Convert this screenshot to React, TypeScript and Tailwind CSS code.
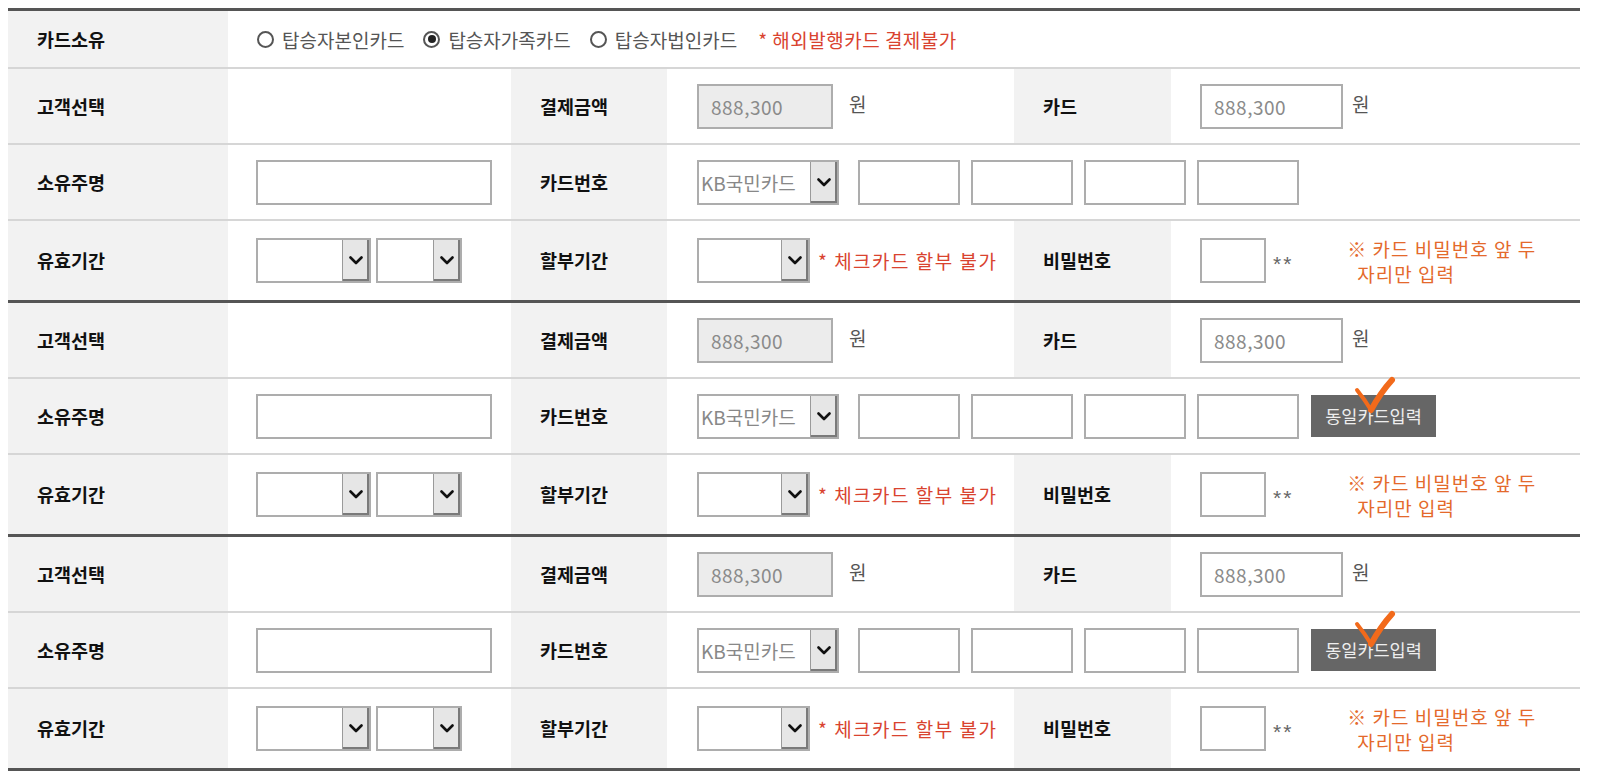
import React from "react";

const FONT = "font-['Noto_Sans_CJK_KR','Noto_Sans',sans-serif]";

function Chevron() {
  return (
    <svg width="14" height="9" viewBox="0 0 14 9">
      <polyline points="1.5,1.5 7,7 12.5,1.5" fill="none" stroke="#111" strokeWidth="2.6" strokeLinecap="round" strokeLinejoin="round" />
    </svg>
  );
}

function Select({ w, text }: { w: string; text?: string }) {
  return (
    <div className={`flex h-[45px] border-2 border-[#adadad] bg-white ${w}`}>
      <div className="flex-1 flex items-center pl-[2px] text-[19px] text-[#888] leading-none whitespace-nowrap overflow-hidden">{text}</div>
      <div className="w-[27px] bg-[#e6e6e6] border-l border-[#9a9a9a] shadow-[inset_-2px_-2px_0_#7a7a7a] flex items-center justify-center">
        <Chevron />
      </div>
    </div>
  );
}

function Box({ w, gray, text }: { w: string; gray?: boolean; text?: string }) {
  return (
    <div
      className={`h-[45px] border-2 border-[#adadad] flex items-center pl-[12px] text-[19px] tracking-[0.5px] text-[#8a8a8a] leading-none ${w} ${gray ? "bg-[#ececec]" : "bg-white"}`}
    >
      {text}
    </div>
  );
}

function Label({ children }: { children: React.ReactNode }) {
  return (
    <div className="bg-[#f2f2f2] flex items-center pl-[29px] text-[18.5px] font-bold text-[#111] leading-none">
      {children}
    </div>
  );
}

function Radio({ checked, label }: { checked?: boolean; label: string }) {
  return (
    <div className="flex items-center">
      <div className="w-[17px] h-[17px] rounded-full border-2 border-[#555] flex items-center justify-center">
        {checked && <div className="w-[8px] h-[8px] rounded-full bg-[#222]" />}
      </div>
      <span className="ml-[8px] text-[19px] text-[#555] leading-none">{label}</span>
    </div>
  );
}

function Check() {
  return (
    <svg className="absolute left-[40px] top-[-21px]" width="50" height="42" viewBox="0 0 50 42">
      <path d="M6 16 Q14 26 20 36" fill="none" stroke="#f26a1b" strokeWidth="4" strokeLinecap="round" />
      <path d="M20 36 Q30 18 41 6" fill="none" stroke="#f26a1b" strokeWidth="6" strokeLinecap="round" />
    </svg>
  );
}

function Thin() {
  return <div className="h-[2px] bg-[#d6d6d6]" />;
}
function Thick() {
  return <div className="h-[3px] bg-[#555]" />;
}

function Group({ button }: { button?: boolean }) {
  return (
    <>
      <div className="grid grid-cols-[220px_283px_156px_347px_157px_1fr] h-[74px]">
        <Label>고객선택</Label>
        <div />
        <Label>결제금액</Label>
        <div className="flex items-center pl-[30px]">
          <Box w="w-[136px]" gray text="888,300" />
          <span className="ml-[16px] -mt-[6px] text-[19px] text-[#555] leading-none">원</span>
        </div>
        <Label>카드</Label>
        <div className="flex items-center pl-[29px]">
          <Box w="w-[143px]" text="888,300" />
          <span className="ml-[9px] -mt-[6px] text-[19px] text-[#555] leading-none">원</span>
        </div>
      </div>
      <Thin />
      <div className="grid grid-cols-[220px_283px_156px_1fr] h-[74px]">
        <Label>소유주명</Label>
        <div className="flex items-center pl-[28px]">
          <Box w="w-[236px]" />
        </div>
        <Label>카드번호</Label>
        <div className="flex items-center pl-[30px]">
          <Select w="w-[142px]" text="KB국민카드" />
          <div className="flex items-center gap-[11px] ml-[19px]">
            <Box w="w-[102px]" />
            <Box w="w-[102px]" />
            <Box w="w-[102px]" />
            <Box w="w-[102px]" />
            {button && (
              <div className="relative ml-[1px]">
                <div className="w-[125px] h-[42px] bg-[#666] text-[#eee] text-[17.5px] flex items-center justify-center leading-none">
                  동일카드입력
                </div>
                <Check />
              </div>
            )}
          </div>
        </div>
      </div>
      <Thin />
      <div className="grid grid-cols-[220px_283px_156px_347px_157px_1fr] h-[79px]">
        <Label>유효기간</Label>
        <div className="flex items-center pl-[28px] gap-[5px]">
          <Select w="w-[115px]" />
          <Select w="w-[86px]" />
        </div>
        <Label>할부기간</Label>
        <div className="flex items-center pl-[30px]">
          <Select w="w-[113px]" />
          <span className="ml-[8px] text-[19px] tracking-[1.5px] text-[#d9432f] leading-none whitespace-nowrap">* 체크카드 할부 불가</span>
        </div>
        <Label>비밀번호</Label>
        <div className="flex items-center pl-[29px]">
          <Box w="w-[66px]" />
          <span className="ml-[7px] mt-[6px] text-[21px] tracking-[2px] text-[#666] leading-none font-['Liberation_Sans',sans-serif]">**</span>
          <div className="ml-[54px] text-[19px] tracking-[1px] text-[#e4692b] leading-[25px] whitespace-nowrap">
            <div>※ 카드 비밀번호 앞 두</div>
            <div className="pl-[10px]">자리만 입력</div>
          </div>
        </div>
      </div>
      <Thick />
    </>
  );
}

export default function App() {
  return (
    <div className={`bg-white w-[1600px] h-[779px] overflow-hidden ${FONT}`}>
      <div className="ml-[8px] mt-[8px] w-[1572px]">
        <Thick />
        <div className="grid grid-cols-[220px_1fr] h-[56px]">
          <Label>카드소유</Label>
          <div className="flex items-center pl-[29px] gap-[19px]">
            <Radio label="탑승자본인카드" />
            <Radio checked label="탑승자가족카드" />
            <Radio label="탑승자법인카드" />
            <span className="ml-[2px] text-[19px] tracking-[0.5px] text-[#d9432f] leading-none">* 해외발행카드 결제불가</span>
          </div>
        </div>
        <Thin />
        <Group />
        <Group button />
        <Group button />
      </div>
    </div>
  );
}
